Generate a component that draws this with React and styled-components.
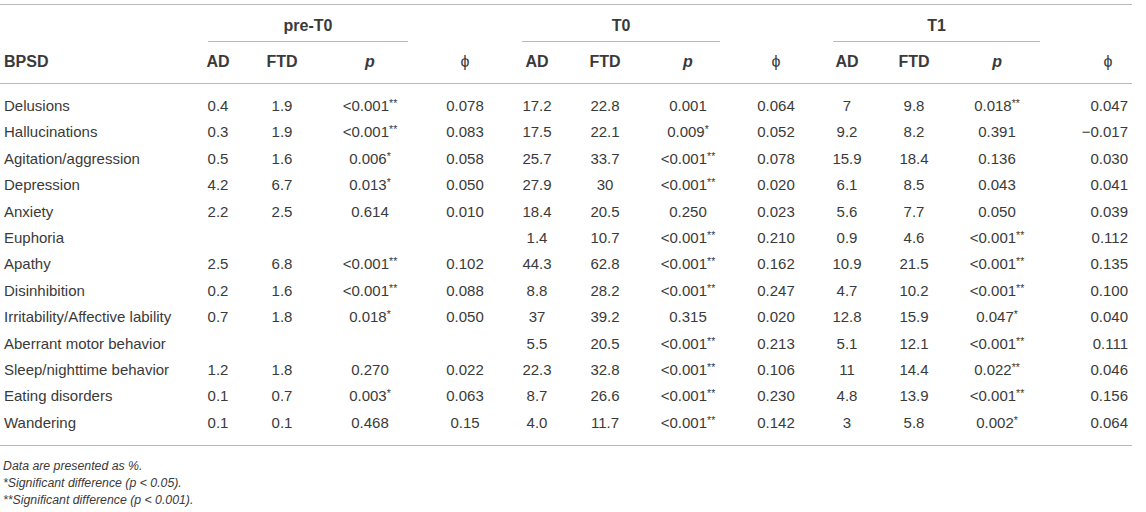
import React from 'react';
import styled, { createGlobalStyle } from 'styled-components';

const GlobalStyle = createGlobalStyle`
  body {
    margin: 0;
    background: #fff;
    font-family: "Liberation Sans", Arial, sans-serif;
    color: #3a3a3a;
  }
`;

const Page = styled.div`
  width: 1132px;
  padding-top: 4px;
`;

const Table = styled.table`
  width: 1132px;
  table-layout: fixed;
  border-collapse: collapse;
  border-top: 1px solid #b9b9b9;
`;

const GroupCell = styled.th`
  padding: 0;
  font-weight: bold;
  font-size: 16px;
`;

const GroupLabel = styled.div`
  margin: 0 ${(p) => p.$right}px 0 ${(p) => p.$left}px;
  padding: 12px 0 6px;
  line-height: 18px;
  text-align: center;
  border-bottom: 1px solid #b9b9b9;
`;

const HeadCell = styled.th`
  padding: 11px 0 12px ${(p) => p.$padLeft || 0}px;
  line-height: 18px;
  font-size: 16px;
  font-weight: ${(p) => (p.$phi ? 'normal' : 'bold')};
  font-style: ${(p) => (p.$italic ? 'italic' : 'normal')};
  text-align: ${(p) => (p.$left ? 'left' : 'center')};
  border-bottom: 1px solid #b9b9b9;
  ${(p) => p.$left && 'padding-left: 4px;'}
`;

const Row = styled.tr`
  td {
    height: 26.4px;
    padding-top: 0;
    padding-bottom: 0;
  }
  &:first-child td {
    padding-top: 8.8px;
  }
  &:last-child td {
    padding-bottom: 8.8px;
    border-bottom: 1px solid #b9b9b9;
  }
`;

const Cell = styled.td`
  font-size: 15px;
  line-height: 18px;
  white-space: nowrap;
  text-align: ${(p) => (p.$left ? 'left' : p.$right ? 'right' : 'center')};
  padding-left: ${(p) => (p.$left ? 4 : 0)}px;
  padding-right: ${(p) => (p.$right ? 4 : 0)}px;
`;

const Star = styled.sup`
  font-size: 10.5px;
  line-height: 0;
  vertical-align: 4px;
`;

const Notes = styled.div`
  margin-top: 12px;
  padding-left: 3px;
  font-size: 12.3px;
  line-height: 17px;
  font-style: italic;
`;

const widths = [190, 56, 72, 104, 86, 58, 78, 88, 88, 54, 80, 86, 92];

const rows = [
  ['Delusions', '0.4', '1.9', '<0.001**', '0.078', '17.2', '22.8', '0.001', '0.064', '7', '9.8', '0.018**', '0.047'],
  ['Hallucinations', '0.3', '1.9', '<0.001**', '0.083', '17.5', '22.1', '0.009*', '0.052', '9.2', '8.2', '0.391', '\u22120.017'],
  ['Agitation/aggression', '0.5', '1.6', '0.006*', '0.058', '25.7', '33.7', '<0.001**', '0.078', '15.9', '18.4', '0.136', '0.030'],
  ['Depression', '4.2', '6.7', '0.013*', '0.050', '27.9', '30', '<0.001**', '0.020', '6.1', '8.5', '0.043', '0.041'],
  ['Anxiety', '2.2', '2.5', '0.614', '0.010', '18.4', '20.5', '0.250', '0.023', '5.6', '7.7', '0.050', '0.039'],
  ['Euphoria', '', '', '', '', '1.4', '10.7', '<0.001**', '0.210', '0.9', '4.6', '<0.001**', '0.112'],
  ['Apathy', '2.5', '6.8', '<0.001**', '0.102', '44.3', '62.8', '<0.001**', '0.162', '10.9', '21.5', '<0.001**', '0.135'],
  ['Disinhibition', '0.2', '1.6', '<0.001**', '0.088', '8.8', '28.2', '<0.001**', '0.247', '4.7', '10.2', '<0.001**', '0.100'],
  ['Irritability/Affective lability', '0.7', '1.8', '0.018*', '0.050', '37', '39.2', '0.315', '0.020', '12.8', '15.9', '0.047*', '0.040'],
  ['Aberrant motor behavior', '', '', '', '', '5.5', '20.5', '<0.001**', '0.213', '5.1', '12.1', '<0.001**', '0.111'],
  ['Sleep/nighttime behavior', '1.2', '1.8', '0.270', '0.022', '22.3', '32.8', '<0.001**', '0.106', '11', '14.4', '0.022**', '0.046'],
  ['Eating disorders', '0.1', '0.7', '0.003*', '0.063', '8.7', '26.6', '<0.001**', '0.230', '4.8', '13.9', '<0.001**', '0.156'],
  ['Wandering', '0.1', '0.1', '0.468', '0.15', '4.0', '11.7', '<0.001**', '0.142', '3', '5.8', '0.002*', '0.064'],
];

// split trailing asterisks off so they can sit small and raised
const Value = ({ text }) => {
  const m = text.match(/^(.*?)(\*+)$/);
  if (!m) return text;
  return (
    <>
      {m[1]}
      <Star>{m[2]}</Star>
    </>
  );
};

const PHI = '\u03D5';

const App = () => (
  <Page>
    <GlobalStyle />
    <Table>
      <colgroup>
        {widths.map((w, i) => (
          <col key={i} style={{ width: w }} />
        ))}
      </colgroup>
      <thead>
        <tr>
          <GroupCell />
          <GroupCell colSpan={3}>
            <GroupLabel $left={18} $right={14}>pre-T0</GroupLabel>
          </GroupCell>
          <GroupCell />
          <GroupCell colSpan={3}>
            <GroupLabel $left={14} $right={12}>T0</GroupLabel>
          </GroupCell>
          <GroupCell />
          <GroupCell colSpan={3}>
            <GroupLabel $left={13} $right={0}>T1</GroupLabel>
          </GroupCell>
          <GroupCell />
        </tr>
        <tr>
          <HeadCell $left>BPSD</HeadCell>
          <HeadCell>AD</HeadCell>
          <HeadCell>FTD</HeadCell>
          <HeadCell $italic>p</HeadCell>
          <HeadCell $phi>{PHI}</HeadCell>
          <HeadCell>AD</HeadCell>
          <HeadCell>FTD</HeadCell>
          <HeadCell $italic>p</HeadCell>
          <HeadCell $phi>{PHI}</HeadCell>
          <HeadCell>AD</HeadCell>
          <HeadCell>FTD</HeadCell>
          <HeadCell $italic>p</HeadCell>
          <HeadCell $phi $padLeft={44}>{PHI}</HeadCell>
        </tr>
      </thead>
      <tbody>
        {rows.map((r) => (
          <Row key={r[0]}>
            {r.map((v, i) => (
              <Cell key={i} $left={i === 0} $right={i === 12}>
                <Value text={v} />
              </Cell>
            ))}
          </Row>
        ))}
      </tbody>
    </Table>
    <Notes>
      <div>Data are presented as %.</div>
      <div>*Significant difference (p &lt; 0.05).</div>
      <div>**Significant difference (p &lt; 0.001).</div>
    </Notes>
  </Page>
);

export default App;
